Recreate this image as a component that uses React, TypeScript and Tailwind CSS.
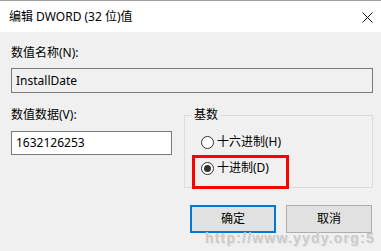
import React from "react";

const font = { fontFamily: '"Noto Sans", "Noto Sans CJK SC", sans-serif' };

function Radio({ checked, label }: { checked?: boolean; label: string }) {
  return (
    <div className="flex h-4 items-center">
      <span className="flex h-[13px] w-[13px] items-center justify-center rounded-full border border-[#333] bg-white">
        {checked && <span className="h-[7px] w-[7px] rounded-full bg-[#333]" />}
      </span>
      <span className="ml-[3px] text-[12px] leading-4 text-black">{label}</span>
    </div>
  );
}

export default function App() {
  return (
    <div className="relative h-[251px] w-[381px] overflow-hidden bg-[#f0f0f0] text-black" style={font}>
      <div className="h-[2px] border-t border-[#a0a0a0] bg-white" />
      <div className="flex h-[30px] items-center justify-between bg-white pl-[9px] pr-[8px]">
        <span className="text-[12px] leading-4">编辑 DWORD (32 位)值</span>
        <svg width="11" height="11" viewBox="0 0 11 11">
          <path d="M0.5 0.5 L10.5 10.5 M10.5 0.5 L0.5 10.5" stroke="#111" strokeWidth="1" />
        </svg>
      </div>

      <div className="pl-[11px] pr-[8px]">
        <div className="mt-[13px] text-[12px] leading-4">数值名称(N):</div>
        <div className="mt-[7px] flex h-[25px] items-center border border-[#7a7a7a] bg-[#f0f0f0] pl-[4px] text-[12px]">
          InstallDate
        </div>

        <div className="mt-[14px] grid grid-cols-[161px_1fr] gap-x-[12px]">
          <div>
            <div className="text-[12px] leading-4">数值数据(V):</div>
            <div className="mt-[8px] flex h-[24px] items-center border border-[#7a7a7a] bg-white pl-[4px] text-[12px]">
              1632126253
            </div>
          </div>

          <fieldset className="m-0 border border-[#dcdcdc] px-0 pb-[11px] pt-0">
            <legend className="ml-[7px] px-[2px] text-[12px] leading-4">基数</legend>
            <div className="ml-[16px] mt-[11px] flex flex-col gap-[10px]">
              <Radio label="十六进制(H)" />
              <Radio checked label="十进制(D)" />
            </div>
          </fieldset>
        </div>

        <div className="mt-[17px] flex justify-end gap-[10px] pr-[1px]">
          <button className="h-[28px] w-[86px] border-2 border-[#0078d7] bg-[#e1e1e1] text-[12px]">确定</button>
          <button className="h-[28px] w-[86px] border border-[#adadad] bg-[#e1e1e1] text-[12px]">取消</button>
        </div>
      </div>

      <div className="absolute left-[192px] top-[155px] h-[34px] w-[97px] border-[3px] border-[#ff0000]" />

      <div
        className="absolute left-[205px] top-[230px] whitespace-nowrap text-[14px] font-bold leading-4 tracking-[1.2px] text-[#cbcbcb]"
        style={{ fontFamily: '"Liberation Sans", sans-serif', textShadow: "1px 1px 0 #e4e4e4" }}
      >
        http://www.yydy.org:5
      </div>
    </div>
  );
}
